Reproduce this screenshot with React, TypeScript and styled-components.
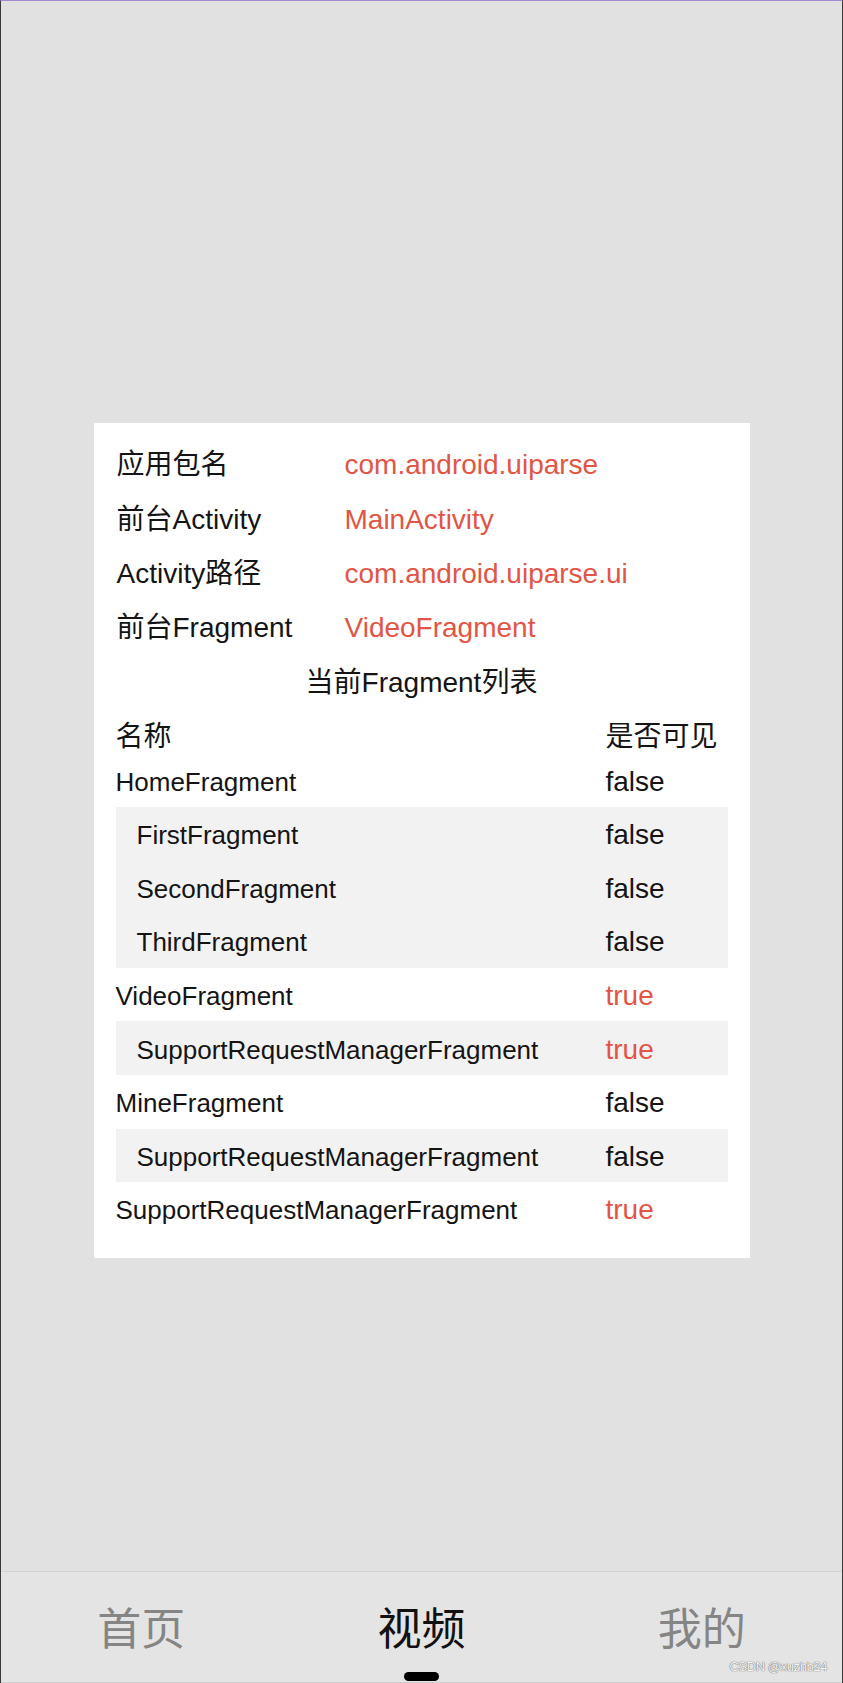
import React from "react";
import styled, { createGlobalStyle } from "styled-components";

const GlobalStyle = createGlobalStyle`
  html, body {
    margin: 0;
    padding: 0;
    background: #e1e1e1;
  }
  * { box-sizing: border-box; }
`;

const RED = "#e25545";
const INK = "#141414";
const ROW_H = 53.6;
const INFO_H = 54.4;

const Screen = styled.div`
  width: 843px;
  height: 1683px;
  display: flex;
  flex-direction: column;
  background: #e1e1e1;
  border-top: 1px solid #a08ad2;
  border-left: 1px solid #3a3a3a;
  border-right: 1px solid #3a3a3a;
  font-family: "Liberation Sans", "Noto Sans CJK SC", sans-serif;
  color: ${INK};
  position: relative;
  overflow: hidden;
`;

const Content = styled.main`
  flex: 1;
  display: flex;
  justify-content: center;
  align-items: flex-start;
  padding-top: 422px;
`;

const Card = styled.section`
  width: 656px;
  background: #ffffff;
  padding: 14px 22px 22px 22px;
  display: flex;
  flex-direction: column;
`;

const InfoRow = styled.div`
  display: grid;
  grid-template-columns: 229px 1fr;
  height: ${INFO_H}px;
  align-items: center;
  font-size: 28px;
  line-height: 32px;
  padding-top: 2px;
`;

const InfoLabel = styled.span`
  color: ${INK};
  padding-left: 1px;
  white-space: nowrap;
`;

const InfoValue = styled.span`
  color: ${RED};
  white-space: nowrap;
`;

const Title = styled.div`
  height: ${INFO_H}px;
  display: flex;
  align-items: center;
  justify-content: center;
  font-size: 28px;
  line-height: 32px;
  padding-top: 3px;
`;

const HeaderRow = styled.div`
  display: grid;
  grid-template-columns: 1fr 122px;
  height: 44.4px;
  align-items: center;
  font-size: 28px;
  line-height: 32px;
  padding-top: 12px;
`;

const DataRow = styled.div<{ $sub?: boolean }>`
  display: grid;
  grid-template-columns: 1fr 122px;
  height: ${ROW_H}px;
  align-items: center;
  line-height: 32px;
  padding-top: 3px;
  padding-left: ${(p) => (p.$sub ? 21 : 0)}px;
  background: ${(p) => (p.$sub ? "#f2f2f2" : "transparent")};
`;

const Name = styled.span`
  font-size: 26px;
  white-space: nowrap;
`;

const Visible = styled.span<{ $on: boolean }>`
  font-size: 28px;
  color: ${(p) => (p.$on ? RED : INK)};
`;

const NavBar = styled.nav`
  height: 112px;
  border-top: 1px solid #d2d2d2;
  border-bottom: 1px solid #cfcfcf;
  background: #e4e4e4;
  display: flex;
  flex-direction: column;
  align-items: center;
`;

const Tabs = styled.div`
  width: 100%;
  display: grid;
  grid-template-columns: repeat(3, 1fr);
  padding-top: 24px;
  height: 100px;
`;

const Tab = styled.div<{ $active?: boolean }>`
  display: flex;
  justify-content: center;
  font-family: "Noto Sans CJK SC", sans-serif;
  font-size: 44px;
  line-height: 60px;
  color: ${(p) => (p.$active ? "#111111" : "#858585")};
`;

const HomeIndicator = styled.div`
  width: 35px;
  height: 9px;
  border-radius: 5px;
  background: #000;
`;

const Watermark = styled.div`
  position: absolute;
  right: 15px;
  bottom: 9px;
  font-family: "Liberation Sans", sans-serif;
  font-size: 13px;
  letter-spacing: -0.4px;
  color: #f6f6f6;
  text-shadow: 0 0 1px #666, 0 0 1px #666;
`;

type Frag = { name: string; sub?: boolean; visible: boolean };

const info: [string, string][] = [
  ["应用包名", "com.android.uiparse"],
  ["前台Activity", "MainActivity"],
  ["Activity路径", "com.android.uiparse.ui"],
  ["前台Fragment", "VideoFragment"],
];

const frags: Frag[] = [
  { name: "HomeFragment", visible: false },
  { name: "FirstFragment", sub: true, visible: false },
  { name: "SecondFragment", sub: true, visible: false },
  { name: "ThirdFragment", sub: true, visible: false },
  { name: "VideoFragment", visible: true },
  { name: "SupportRequestManagerFragment", sub: true, visible: true },
  { name: "MineFragment", visible: false },
  { name: "SupportRequestManagerFragment", sub: true, visible: false },
  { name: "SupportRequestManagerFragment", visible: true },
];

export default function App() {
  return (
    <>
      <GlobalStyle />
      <Screen>
        <Content>
          <Card>
            {info.map(([k, v]) => (
              <InfoRow key={k}>
                <InfoLabel>{k}</InfoLabel>
                <InfoValue>{v}</InfoValue>
              </InfoRow>
            ))}
            <Title>当前Fragment列表</Title>
            <HeaderRow>
              <span>名称</span>
              <span>是否可见</span>
            </HeaderRow>
            {frags.map((f, i) => (
              <DataRow key={i} $sub={f.sub}>
                <Name>{f.name}</Name>
                <Visible $on={f.visible}>{f.visible ? "true" : "false"}</Visible>
              </DataRow>
            ))}
          </Card>
        </Content>
        <NavBar>
          <Tabs>
            <Tab>首页</Tab>
            <Tab $active>视频</Tab>
            <Tab>我的</Tab>
          </Tabs>
          <HomeIndicator />
        </NavBar>
        <Watermark>CSDN @xuzhb24</Watermark>
      </Screen>
    </>
  );
}
